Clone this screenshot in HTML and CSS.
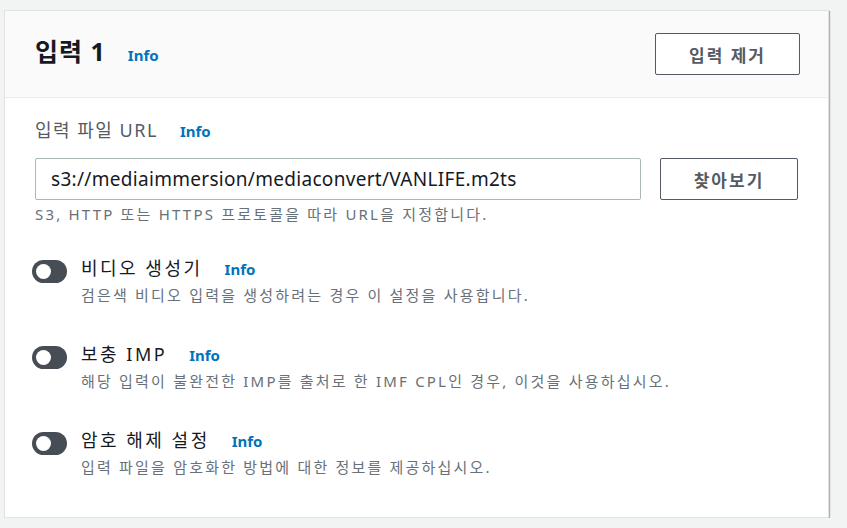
FILE: index.html
```html
<!DOCTYPE html>
<html lang="ko">
<head>
    <meta charset="UTF-8">
    <title>입력 1</title>
    <link rel="stylesheet" href="styles.css">
</head>
<body>
    <div class="card">
        <div class="card-header">
            <h2>입력 1 <a href="#" class="info">Info</a></h2>
            <button class="btn">입력 제거</button>
        </div><!--card-header-->

        <div class="card-body">
            <div class="field">
                <label>입력 파일 URL <a href="#" class="info">Info</a></label>
                <div class="field-row">
                    <input type="text" value="s3://mediaimmersion/mediaconvert/VANLIFE.m2ts">
                    <button class="btn">찾아보기</button>
                </div>
                <p class="hint">S3, HTTP 또는 HTTPS 프로토콜을 따라 URL을 지정합니다.</p>
            </div><!--field-->

            <div class="toggle-row">
                <span class="toggle"></span>
                <div>
                    <div class="toggle-label">비디오 생성기 <a href="#" class="info">Info</a></div>
                    <p class="hint">검은색 비디오 입력을 생성하려는 경우 이 설정을 사용합니다.</p>
                </div>
            </div>

            <div class="toggle-row">
                <span class="toggle"></span>
                <div>
                    <div class="toggle-label">보충 IMP <a href="#" class="info">Info</a></div>
                    <p class="hint">해당 입력이 불완전한 IMP를 출처로 한 IMF CPL인 경우, 이것을 사용하십시오.</p>
                </div>
            </div>

            <div class="toggle-row">
                <span class="toggle"></span>
                <div>
                    <div class="toggle-label">암호 해제 설정 <a href="#" class="info">Info</a></div>
                    <p class="hint">입력 파일을 암호화한 방법에 대한 정보를 제공하십시오.</p>
                </div>
            </div>
        </div><!--card-body-->
    </div><!--card-->
</body>
</html>
```

FILE: styles.css
```css
*{
    padding: 0;
    margin: 0;
    box-sizing: border-box;
}

body{
    background-color: #f2f3f3;
    font-family: "Noto Sans", "Noto Sans CJK KR", sans-serif;
    color: #16191f;
    padding: 10px 0 0 4px;
}

.card{
    width: 825px;
    background-color: #fff;
    border: 1px solid #e0e3e3;
    box-shadow: 1px 1px 1px 0 rgba(0, 28, 36, 0.3);
}

.card-header{
    display: flex;
    align-items: center;
    justify-content: space-between;
    height: 87px;
    padding: 0 28px 0 30px;
    background-color: #fafafa;
    border-bottom: 1px solid #eaeded;
}

h2{
    font-size: 25px;
    font-weight: 700;
    letter-spacing: 1px;
    display: flex;
    align-items: baseline;
    margin-top: -8px;
}

.info{
    color: #0073bb;
    font-size: 15px;
    font-weight: 700;
    letter-spacing: 0;
    text-decoration: none;
    margin-left: 22px;
}

h2 .info{
    margin-left: 22px;
}

.btn{
    font-family: inherit;
    font-size: 17px;
    font-weight: 700;
    letter-spacing: 2px;
    color: #545b64;
    background-color: #fff;
    border: 1px solid #545b64;
    border-radius: 2px;
    width: 145px;
    height: 42px;
    cursor: pointer;
}

.card-body{
    padding: 18px 30px 40px 30px;
}

label{
    display: flex;
    align-items: baseline;
    font-size: 18px;
    letter-spacing: 1.5px;
    color: #545b64;
    margin-bottom: 16px;
}

.field-row{
    display: flex;
    gap: 19px;
    align-items: center;
}

input{
    width: 606px;
    height: 42px;
    border: 1px solid #aab7b8;
    border-radius: 2px;
    padding: 0 15px;
    font-family: inherit;
    font-size: 19px;
    letter-spacing: 0.3px;
    color: #16191f;
}

.field-row .btn{
    width: 138px;
}

.hint{
    font-size: 15px;
    letter-spacing: 2.2px;
    color: #687078;
    margin-top: 3px;
}

.toggle-row{
    display: flex;
    gap: 14px;
    margin-top: 37px;
    margin-left: -3px;
}

.field + .toggle-row{
    margin-top: 32px;
}

.toggle{
    position: relative;
    width: 35px;
    height: 23px;
    border-radius: 12px;
    background-color: #474d55;
    margin-top: 4px;
    flex-shrink: 0;
}

.toggle::after{
    content: "";
    position: absolute;
    left: 4px;
    top: 4px;
    width: 15px;
    height: 15px;
    border-radius: 50%;
    background-color: #fff;
}

.toggle-label{
    font-size: 18px;
    letter-spacing: 2.5px;
    display: flex;
    align-items: baseline;
    line-height: 24px;
}
```
